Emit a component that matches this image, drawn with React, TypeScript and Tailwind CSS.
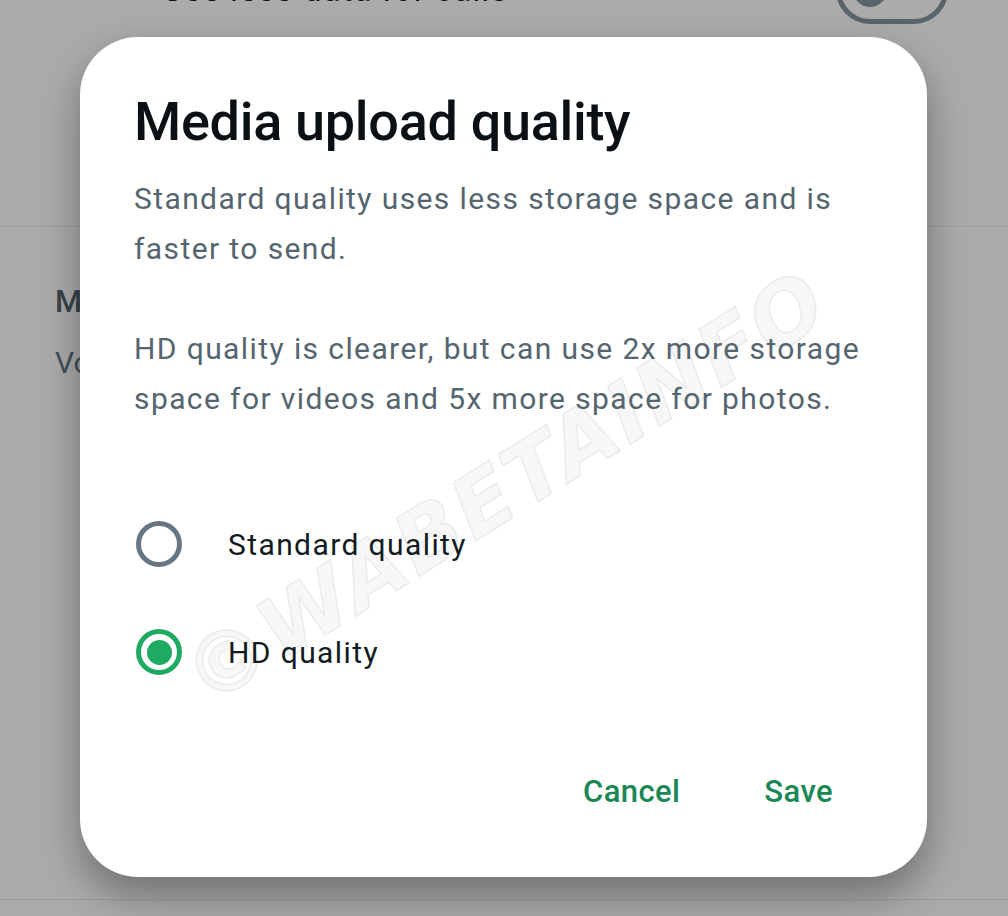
import { useState } from "react";

type Option = {
  id: string;
  label: string;
};

const options: Option[] = [
  { id: "standard", label: "Standard quality" },
  { id: "hd", label: "HD quality" },
];

function Radio({ checked }: { checked: boolean }) {
  return (
    <span
      className={`flex h-[46px] w-[46px] shrink-0 items-center justify-center rounded-full border-[5px] ${
        checked ? "border-[#1daa61]" : "border-[#667781]"
      }`}
    >
      {checked && <span className="h-[25px] w-[25px] rounded-full bg-[#1daa61]" />}
    </span>
  );
}

export default function App() {
  const [quality, setQuality] = useState("hd");

  return (
    <div className="relative h-[916px] w-[1008px] overflow-hidden bg-white font-['Roboto',sans-serif]">
      {/* settings page behind the dialog */}
      <div className="flex flex-col">
        <div className="-mt-[44px] flex h-[68px] items-center justify-between pl-[162px] pr-[60px]">
          <span className="text-[33px] tracking-[1px] text-[#111b21]">Use less data for calls</span>
          <span className="flex h-[68px] w-[112px] items-center rounded-full border-[5px] border-[#8696a0] px-[12px]">
            <span className="h-[34px] w-[34px] rounded-full bg-[#8696a0]" />
          </span>
        </div>
        <div className="h-[203px] border-b border-[#e9edef]" />
        <div className="flex flex-col gap-[14px] pl-[55px] pt-[52px]">
          <span className="text-[31px] font-medium text-[#54656f]">Media upload quality</span>
          <span className="text-[30px] text-[#667781]">Voice message transcripts</span>
        </div>
        <div className="mt-[514px] border-b border-[#e9edef]" />
      </div>

      {/* scrim */}
      <div className="absolute inset-0 bg-black/[0.33]" />

      {/* dialog */}
      <div className="absolute left-[80px] top-[37px] flex h-[840px] w-[847px] flex-col overflow-hidden rounded-[58px] bg-white pl-[54px] pr-[50px] pb-[55px] pt-[55px] shadow-[0_18px_40px_rgba(0,0,0,0.35)]">
        <span className="pointer-events-none absolute left-[112px] top-[605px] origin-left -rotate-[32deg] select-none whitespace-nowrap font-['DejaVu_Sans',sans-serif] text-[84px] font-bold italic leading-none tracking-[3px] text-[#f7f7f7] [-webkit-text-stroke:1.5px_#ebebeb]">
          ©WABETAINFO
        </span>

        <h1 className="relative h-[60px] text-[54px] font-medium leading-[60px] tracking-[-0.3px] text-[#0b1014]">
          Media upload quality
        </h1>

        <div className="relative mt-[22px] flex flex-col gap-[50px] text-[30px] leading-[50px] tracking-[1.4px] text-[#54656f]">
          <p>Standard quality uses less storage space and is faster to send.</p>
          <p>HD quality is clearer, but can use 2x more storage space for videos and 5x more space for photos.</p>
        </div>

        <div className="relative mt-[66px] flex flex-col">
          {options.map((o) => (
            <button
              key={o.id}
              onClick={() => setQuality(o.id)}
              className="flex h-[108px] items-center gap-[46px] pl-[2px] text-left"
            >
              <Radio checked={quality === o.id} />
              <span className="text-[30px] tracking-[1.4px] text-[#111b21]">{o.label}</span>
            </button>
          ))}
        </div>

        <div className="relative mt-[56px] flex h-[60px] items-center justify-end gap-[84px] pr-[44px] text-[31px] font-medium tracking-[0.4px] text-[#1b8755]">
          <button>Cancel</button>
          <button>Save</button>
        </div>
      </div>
    </div>
  );
}
